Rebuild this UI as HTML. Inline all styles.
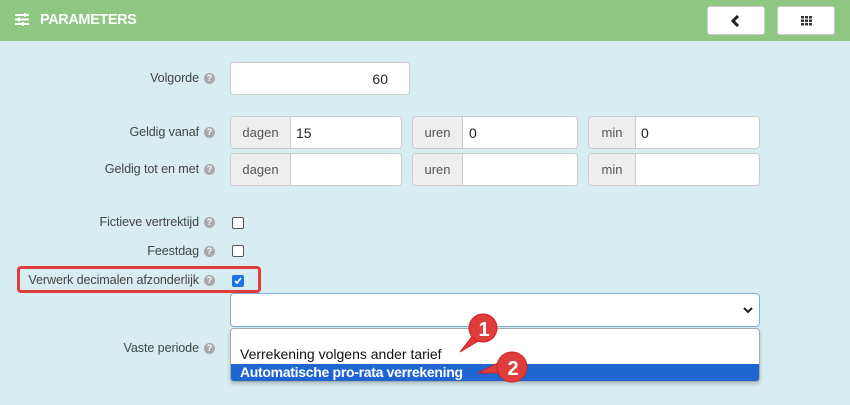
<!DOCTYPE html><html><head><style>
body{margin:0;width:850px;height:405px;background:#d7edf1;font-family:"Liberation Sans",sans-serif;position:relative;overflow:hidden}
.hd{position:absolute;left:0;top:0;width:850px;height:41px;background:#8fc684;}
.t{position:absolute;left:40px;top:12px;color:#fff;font-weight:bold;font-size:14.5px;letter-spacing:-0.4px}
.btn{position:absolute;top:6px;width:58px;height:29px;background:#fff;border:1px solid #ccc;border-radius:3px;box-sizing:border-box}
.lbl{position:absolute;right:635px;font-size:12.6px;color:#444;white-space:nowrap;letter-spacing:-0.1px;line-height:15px}
.q{display:inline-block;width:11px;height:11px;border-radius:50%;background:#a9a9a9;color:#fff;font-size:9px;text-align:center;line-height:11px;font-weight:bold;margin-left:5px;vertical-align:top;position:relative;top:2px}
.in{position:absolute;background:#fff;border:1px solid #ccc;border-radius:4px;box-sizing:border-box;font-size:14px;color:#222}
.ad{position:absolute;top:0;left:0;bottom:0;background:#eee;border-right:1px solid #ccc;color:#555;font-size:13px;text-align:center;border-radius:4px 0 0 4px}
.cb{position:absolute;left:232px;width:12px;height:12px;border:1px solid #555;border-radius:2px;background:#fff;box-sizing:border-box}
</style></head><body>
<div class="hd">
<svg style="position:absolute;left:15px;top:13px" width="14" height="13" viewBox="0 0 14 13"><g fill="#fff"><rect x="0" y="1" width="14" height="2"/><rect x="0" y="5.5" width="14" height="2"/><rect x="0" y="10" width="14" height="2"/><rect x="9" y="0" width="2" height="4" /><rect x="3" y="4.5" width="2" height="4"/><rect x="7" y="9" width="2" height="4"/></g></svg>
<div class="t">PARAMETERS</div>
<div class="btn" style="left:707px"><svg style="position:absolute;left:23px;top:8px" width="10" height="12" viewBox="0 0 10 12"><path d="M7 1L2 6l5 5" stroke="#222" stroke-width="3" fill="none"/></svg></div>
<div class="btn" style="left:777px"><svg style="position:absolute;left:23px;top:9px" width="11" height="10"><g fill="#333"><rect x="0" y="0" width="3" height="2.5"/><rect x="4" y="0" width="3" height="2.5"/><rect x="8" y="0" width="3" height="2.5"/><rect x="0" y="3.5" width="3" height="2.5"/><rect x="4" y="3.5" width="3" height="2.5"/><rect x="8" y="3.5" width="3" height="2.5"/><rect x="0" y="7" width="3" height="2.5"/><rect x="4" y="7" width="3" height="2.5"/><rect x="8" y="7" width="3" height="2.5"/></g></svg></div>
</div>
<div class="lbl" style="top:71px">Volgorde<span class="q">?</span></div>
<div class="in" style="left:230px;top:62px;width:180px;height:33px;text-align:right;padding:8px 21px 0 0">60</div>
<div class="lbl" style="top:125px">Geldig vanaf<span class="q">?</span></div>
<div class="lbl" style="top:162px">Geldig tot en met<span class="q">?</span></div>
<div class="in" style="left:230px;top:116px;width:172px;height:33px;padding:8px 0 0 65px">15<div class="ad" style="width:59px;line-height:31px">dagen</div></div>
<div class="in" style="left:412px;top:116px;width:166px;height:33px;padding:8px 0 0 56px">0<div class="ad" style="width:49px;line-height:31px">uren</div></div>
<div class="in" style="left:588px;top:116px;width:172px;height:33px;padding:8px 0 0 52px">0<div class="ad" style="width:46px;line-height:31px">min</div></div>
<div class="in" style="left:230px;top:153px;width:172px;height:33px"><div class="ad" style="width:59px;line-height:31px">dagen</div></div>
<div class="in" style="left:412px;top:153px;width:166px;height:33px"><div class="ad" style="width:49px;line-height:31px">uren</div></div>
<div class="in" style="left:588px;top:153px;width:172px;height:33px"><div class="ad" style="width:46px;line-height:31px">min</div></div>
<div class="lbl" style="top:215px">Fictieve vertrektijd<span class="q">?</span></div>
<div class="cb" style="top:217px"></div>
<div class="lbl" style="top:244px">Feestdag<span class="q">?</span></div>
<div class="cb" style="top:245px"></div>
<div style="position:absolute;left:17px;top:266px;width:244px;height:27px;border:3px solid #e03c3c;border-radius:4px;box-sizing:border-box"></div>
<div class="lbl" style="top:273px">Verwerk decimalen afzonderlijk<span class="q">?</span></div>
<div class="cb" style="top:275px;background:#1a73e8;border-color:#1a73e8"><svg width="10" height="10" style="position:absolute;left:0;top:0"><path d="M2 5l2 2 4-5" stroke="#fff" stroke-width="1.8" fill="none"/></svg></div>
<div class="in" style="left:230px;top:293px;width:530px;height:34px;border-color:#7aaee0"><svg style="position:absolute;right:6px;top:13px" width="10" height="7"><path d="M1 1l4 4 4-4" stroke="#222" stroke-width="2" fill="none"/></svg></div>
<div class="lbl" style="top:341px">Vaste periode<span class="q">?</span></div>
<div style="position:absolute;left:230px;top:328px;width:530px;height:54px;background:#fff;border:1px solid #aaa;border-radius:4px;box-sizing:border-box;overflow:hidden;box-shadow:0 2px 4px rgba(0,0,0,.2)">
<div style="position:absolute;left:9px;top:17px;font-size:14px;color:#111">Verrekening volgens ander tarief</div>
<div style="position:absolute;left:0;top:35px;width:100%;height:18px;background:#1e66d0;color:#fff;font-size:14px;font-weight:bold;padding-left:9px;box-sizing:border-box;line-height:17px;letter-spacing:-0.3px">Automatische pro-rata verrekening</div>
</div>
<svg style="position:absolute;left:0;top:0" width="850" height="405"><g fill="#e03c3c" stroke="#c22" stroke-width="1"><path d="M460 352L474 334L480 340Z"/><circle cx="483" cy="328" r="14"/><path d="M478 373L500 362L502 373Z"/><circle cx="512" cy="367" r="15"/></g>
<g fill="#fff" font-family="Liberation Sans" font-weight="bold" font-size="20" text-anchor="middle"><text x="484" y="336">1</text><text x="513" y="375">2</text></g></svg>
</body></html>
